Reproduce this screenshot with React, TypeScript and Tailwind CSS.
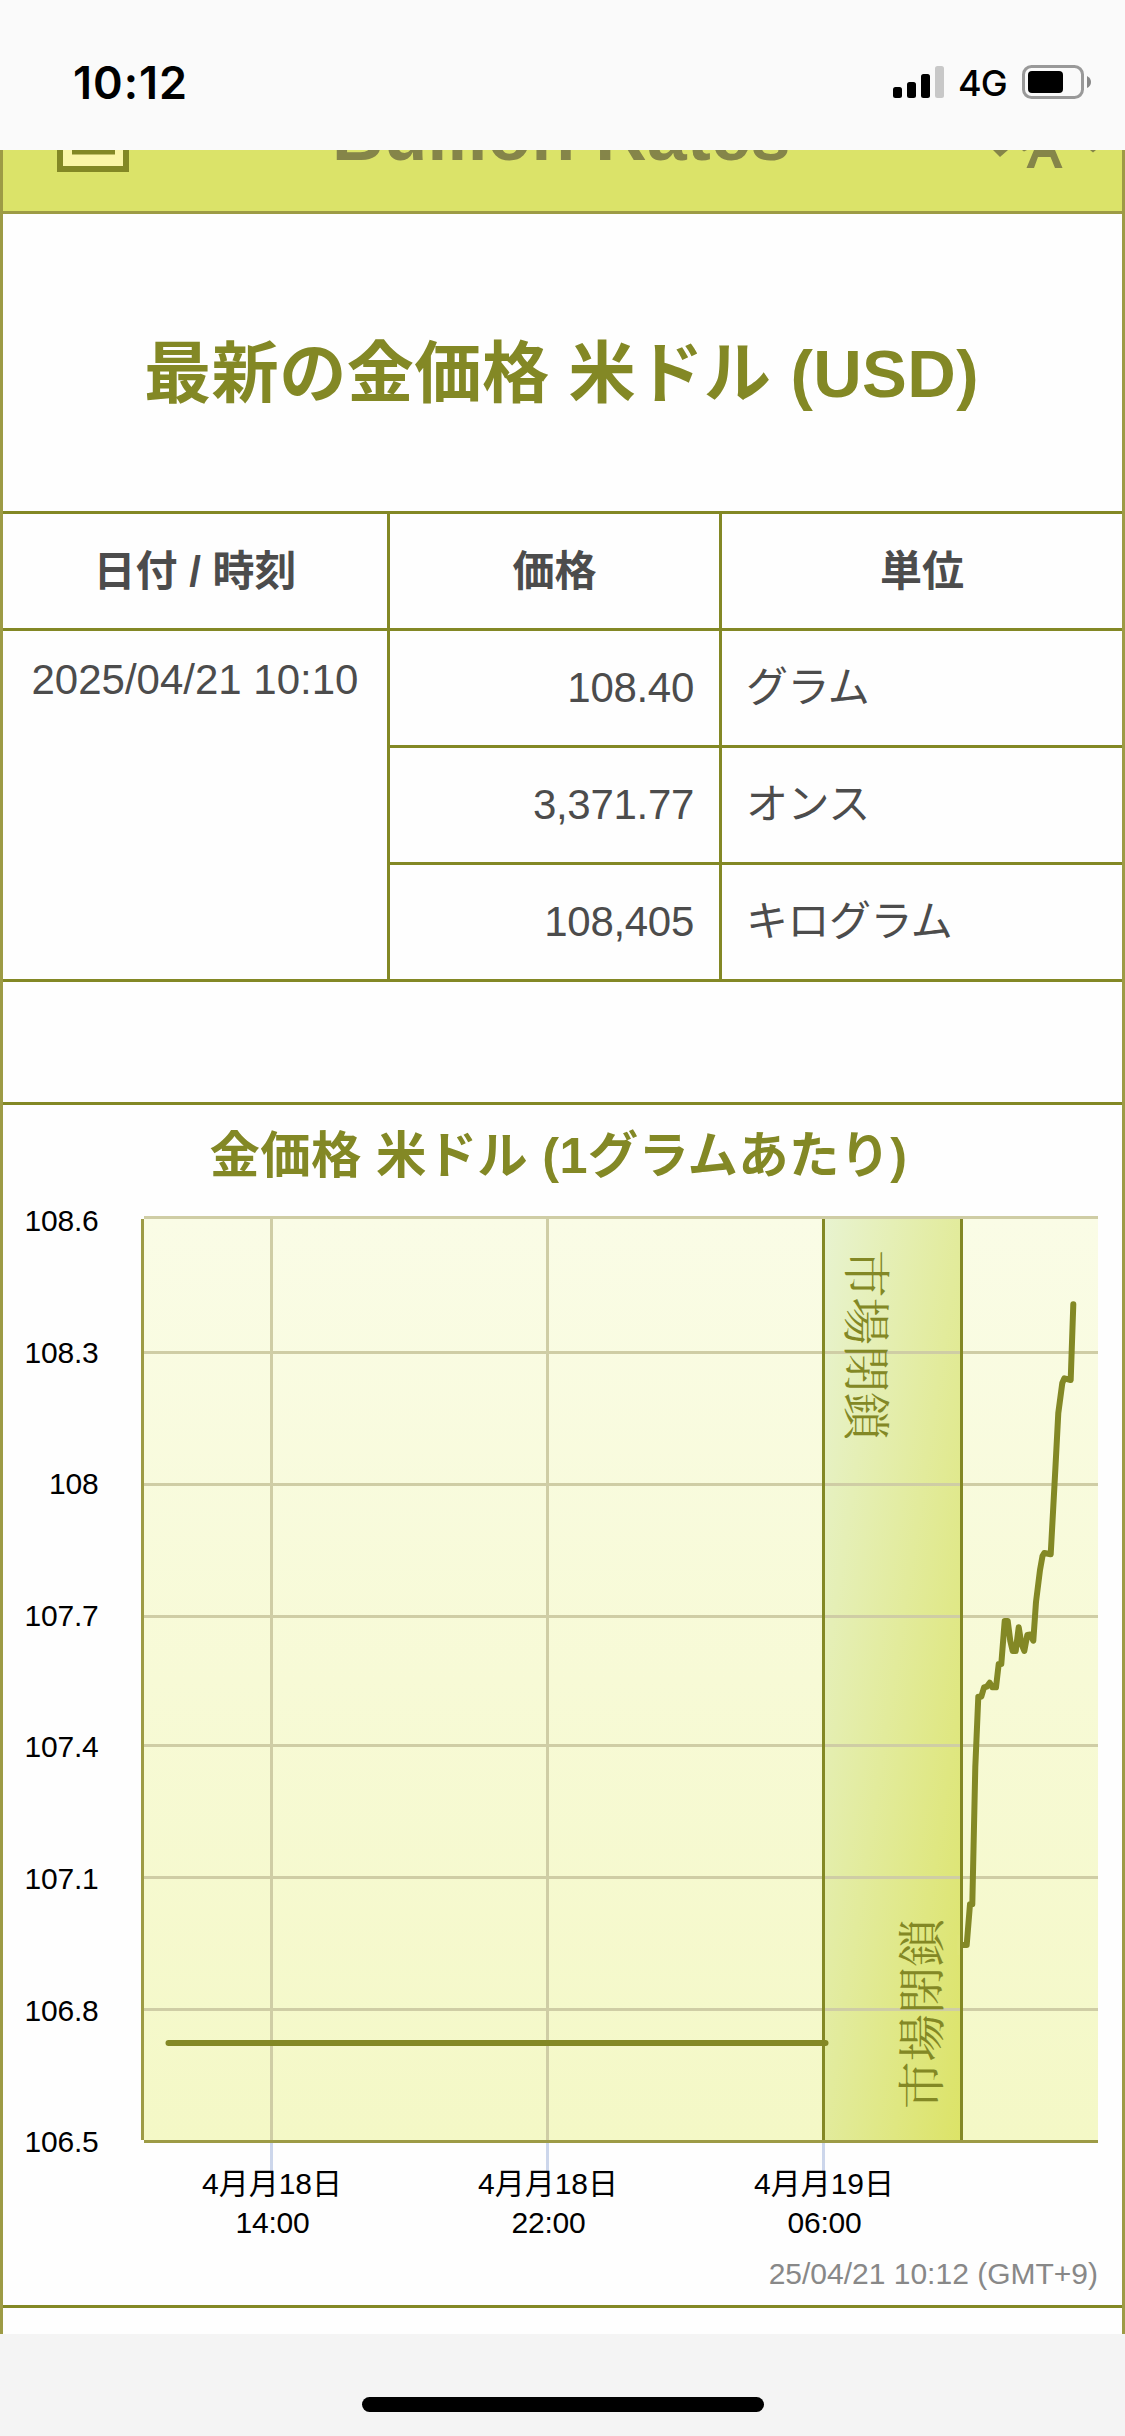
import React from "react";

const sans = "font-['Liberation_Sans','Noto_Sans_CJK_JP',sans-serif]";

const yTicks = [
  { label: "108.6", line: 1216 },
  { label: "108.3", line: 1351 },
  { label: "108", line: 1483 },
  { label: "107.7", line: 1615 },
  { label: "107.4", line: 1744 },
  { label: "107.1", line: 1876 },
  { label: "106.8", line: 2008 },
  { label: "106.5", line: 2140 },
];

const xTicks = [
  { x: 270, day: "4月月18日", time: "14:00" },
  { x: 546, day: "4月月18日", time: "22:00" },
  { x: 822, day: "4月月19日", time: "06:00" },
];

const rows = [
  { price: "108.40", unit: "グラム" },
  { price: "3,371.77", unit: "オンス" },
  { price: "108,405", unit: "キログラム" },
];

const pricePoints =
  "960,1945 966.7,1945 970,1904.3 972.3,1904.3 975.3,1767 978.3,1696.7 981.3,1696.7 984,1687.5 986.7,1686.7 989.7,1682.7 992.3,1687.3 996,1687.3 998.7,1664 1001.3,1664 1004.7,1621 1007.7,1621 1010.3,1641 1012.7,1651 1015.7,1651 1018.7,1627.3 1021.3,1643.3 1024.3,1651 1027.3,1635 1030.3,1634.5 1033.3,1640.7 1036,1602 1040,1570 1042.5,1556 1044.3,1553 1050.7,1554.3 1055.3,1470 1058.3,1413 1062.3,1383 1064.3,1378.3 1070.7,1380 1073.3,1304.3";

function StatusBar() {
  return (
    <div className="flex h-[150px] shrink-0 items-start justify-between bg-[#fafafa] pl-[73px] pr-[33px] pt-[62px] font-['Inter',sans-serif] text-black">
      <div className="text-[45px] leading-[41px] font-semibold tracking-[1px]">10:12</div>
      <div className="flex h-[41px] items-start">
        <svg width="52" height="33" className="mt-1" viewBox="0 0 52 33">
          <rect x="0" y="21" width="9" height="11" rx="2.5" />
          <rect x="14" y="16" width="9" height="16" rx="2.5" />
          <rect x="28" y="8" width="9" height="24" rx="2.5" />
          <rect x="42" y="0" width="9" height="32" rx="2.5" fill="#c8c8c8" />
        </svg>
        <span className="ml-[13px] w-[50px] text-[36px] leading-[43px] font-medium tracking-[-0.8px]">4G</span>
        <svg width="70" height="36" className="ml-[14px] mt-[3px]" viewBox="0 0 70 36">
          <rect x="1.5" y="1.5" width="59" height="31" rx="8" fill="none" stroke="#999" strokeWidth="3" />
          <rect x="6" y="6" width="35" height="22" rx="4" />
          <path d="M65 11 Q69 13 69 17 Q69 21 65 23Z" fill="#888" />
        </svg>
      </div>
    </div>
  );
}

function Header() {
  return (
    <div className="flex h-[64px] shrink-0 items-start overflow-hidden border-b-[3px] border-[#9d9b45] bg-[#dbe369] pl-[54px]">
      <svg width="72" height="22" viewBox="0 0 72 22" className="shrink-0">
        <rect width="72" height="22" fill="#838825" />
        <rect x="6" width="60" height="16" fill="#faf5a6" />
        <rect x="15" width="43" height="4.5" fill="#838825" />
      </svg>
      <div className="-mt-[55px] ml-[203px] w-[661px] text-[71.4px] leading-[80px] font-bold tracking-[0.2px] whitespace-nowrap text-[#858549]">
        Bullion Rates
      </div>
      <svg width="103" height="20" viewBox="0 0 103 20" className="shrink-0" fill="#858549">
        <path d="M0 0H15L7 7L3 3Z" />
        <path d="M29 0h5l-3 1.500Z" />
        <path d="M41 0H62L69.500 18H62L57.500 7H45L41 18H33.500Z" />
        <path d="M97 0h6l-3 2.500Z" />
      </svg>
    </div>
  );
}

function PriceTable() {
  return (
    <div className="grid shrink-0 grid-cols-[384px_3px_329px_3px_400px] text-[42px] text-[#4c4c4c]">
      <div className="col-span-5 h-[3px] bg-[#838825]" />
      <div className="flex h-[114px] items-center justify-center font-bold">日付 / 時刻</div>
      <div className="bg-[#838825]" />
      <div className="flex items-center justify-center font-bold">価格</div>
      <div className="bg-[#838825]" />
      <div className="flex items-center justify-center font-bold">単位</div>
      <div className="col-span-5 h-[3px] bg-[#838825]" />
      <div className="row-span-5 pt-[25px] text-center leading-[48px]">2025/04/21 10:10</div>
      <div className="row-span-5 bg-[#838825]" />
      {rows.map((r, i) => (
        <React.Fragment key={r.unit}>
          {i > 0 && <div className="col-span-3 h-[3px] bg-[#838825]" />}
          <div className="flex h-[114px] items-center justify-end pb-[2px] pr-[25px] tracking-[-0.3px]">{r.price}</div>
          <div className="bg-[#838825]" />
          <div className="flex items-center pb-[2px] pl-[24px] tracking-[-0.5px]">{r.unit}</div>
        </React.Fragment>
      ))}
      <div className="col-span-5 h-[3px] bg-[#838825]" />
    </div>
  );
}

function Chart() {
  return (
    <svg width="1119" height="1105" viewBox="3 1200 1119 1105" className="shrink-0">
      <defs>
        <linearGradient id="plot" x1="0" y1="0" x2="0" y2="1">
          <stop offset="0" stopColor="#fafce6" />
          <stop offset="1" stopColor="#f4f8c6" />
        </linearGradient>
        <linearGradient id="closed" x1="0" y1="0" x2="1" y2="1">
          <stop offset="0" stopColor="#e8f3d0" />
          <stop offset="1" stopColor="#dce367" />
        </linearGradient>
      </defs>
      <rect x="144" y="1217" width="954" height="925" fill="url(#plot)" />
      <rect x="824" y="1218" width="138" height="923" fill="url(#closed)" />
      {yTicks.map((t) => (
        <rect
          key={t.label}
          x="144"
          y={t.line}
          width="954"
          height="3"
          fill={t.line === 2140 ? "#9d9b45" : "#cfcda5"}
        />
      ))}
      {xTicks.map((t) => (
        <g key={t.x}>
          <rect x={t.x} y="1219" width="3" height="921" fill="#cfcda5" />
          <rect x={t.x} y="2143" width="3" height="28" fill="#ccd6eb" />
        </g>
      ))}
      <rect x="141" y="1219" width="3" height="921" fill="#9d9b45" />
      <rect x="822" y="1219" width="3" height="921" fill="#838825" />
      <g fill="none" stroke="#838825" strokeWidth="6" strokeLinecap="round" strokeLinejoin="round">
        <path d="M168.500 2043H825.500" />
        <polyline points={pricePoints} />
      </g>
      <rect x="957" y="1935" width="3" height="20" fill="#dee577" />
      <rect x="960" y="1219" width="3" height="921" fill="#838825" />
      <g fill="#838825" fontSize="47.5" fontFamily="'Noto Serif CJK JP','Noto Sans CJK JP',serif">
        <text transform="translate(849 1250) rotate(90)">市場閉鎖</text>
        <text transform="translate(939 2109) rotate(-90)">市場閉鎖</text>
      </g>
      <g fontSize="30">
        {yTicks.map((t, i) => (
          <text key={t.label} x="98.500" y={1231 + i * 131.6} textAnchor="end" letterSpacing="-0.2">
            {t.label}
          </text>
        ))}
        {xTicks.map((t) => (
          <g key={t.x} textAnchor="middle">
            <text x={t.x + 2} y="2194">{t.day}</text>
            <text x={t.x + 2.500} y="2233" letterSpacing="-0.2">{t.time}</text>
          </g>
        ))}
        <text x="1098" y="2284" textAnchor="end" fill="#888">
          25/04/21 10:12 (GMT+9)
        </text>
      </g>
    </svg>
  );
}

export default function App() {
  return (
    <div className={`flex h-[2436px] w-[1125px] flex-col overflow-hidden bg-[#f4f4f4] ${sans}`}>
      <StatusBar />
      <main className="flex h-[2184px] shrink-0 flex-col overflow-hidden border-x-[3px] border-[#9d9b45] bg-[#fefefe]">
        <Header />
        <h1 className="flex h-[297px] shrink-0 items-center justify-center pr-[2px] pt-[22px] text-[67.2px] leading-[80px] font-bold tracking-[0.4px] text-[#838825]">
          最新の金価格 米ドル (USD)
        </h1>
        <PriceTable />
        <div className="h-[123px] shrink-0 border-b-[3px] border-[#838825]" />
        <h2 className="flex h-[95px] shrink-0 items-start justify-center pr-[8px] pt-[18px] text-[50.4px] leading-[66px] font-bold tracking-[0.3px] text-[#838825]">
          金価格 米ドル (1グラムあたり)
        </h2>
        <Chart />
        <div className="h-[3px] shrink-0 bg-[#838825]" />
      </main>
      <div className="flex h-[102px] shrink-0 justify-center pt-[63px]">
        <div className="h-[15px] w-[402px] rounded-full bg-black" />
      </div>
    </div>
  );
}
